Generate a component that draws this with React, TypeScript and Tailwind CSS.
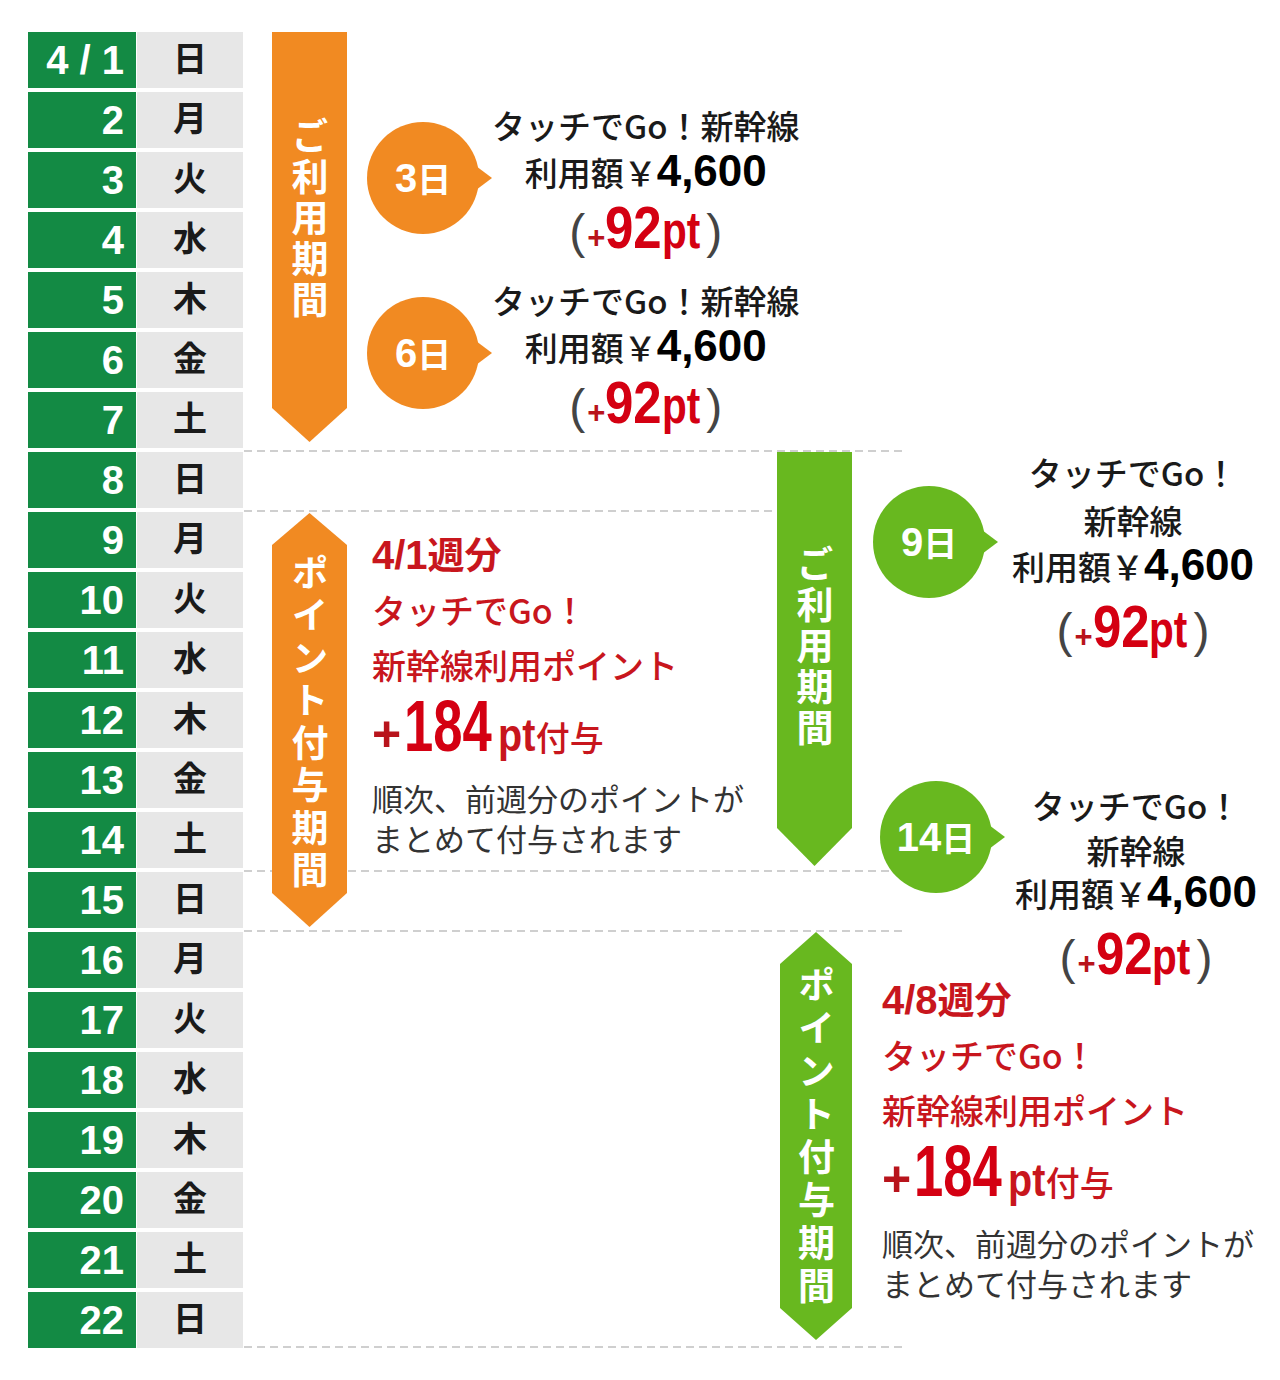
const latin = "font-['Liberation_Sans',sans-serif] font-bold";
const paren = "font-['Liberation_Sans',sans-serif] font-normal text-[48px] text-[#444]";

const days = ['日', '月', '火', '水', '木', '金', '土'];

function VText({ text, track }: { text: string; track: string }) {
  return (
    <div className={`[writing-mode:vertical-rl] text-white text-[37px] font-bold leading-none ${track}`}>
      {text}
    </div>
  );
}

function Bubble({ n, bg }: { n: string; bg: string }) {
  return (
    <div className="flex items-center shrink-0">
      <div className={`w-[112px] h-[112px] rounded-full ${bg} flex items-center justify-center text-white leading-none`}>
        <span className={`${latin} text-[40px]`}>{n}</span>
        <span className="text-[34px] font-bold">日</span>
      </div>
      <div className={`w-[16px] h-[24px] -ml-[3px] ${bg} [clip-path:polygon(0_0,100%_50%,0_100%)]`} />
    </div>
  );
}

function PtLine() {
  return (
    <div className="h-[40px] leading-[40px] text-[33px] whitespace-nowrap">
      <span className={paren}>(</span>
      <span className={`${latin} text-[31px] text-[#b8141c] ml-[2px]`}>+</span>
      <span className={`${latin} inline-block origin-left scale-x-[0.85] -mr-[10px] text-[60px] text-[#d40012]`}>92</span>
      <span className={`${latin} inline-block origin-left scale-x-[0.78] -mr-[11px] text-[52px] text-[#d40012]`}>pt</span>
      <span className={`${paren} ml-[6px]`}>)</span>
    </div>
  );
}

function AmountLine() {
  return (
    <div className="h-[40px] leading-[40px] text-[33px] whitespace-nowrap font-medium">
      <span>利用額￥</span>
      <span className={`${latin} text-[44px] text-black`}>4,600</span>
    </div>
  );
}

function PointBlock({ week }: { week: string }) {
  return (
    <div className="flex flex-col text-[#c8161d] whitespace-nowrap">
      <div className="h-[40px] leading-[40px] text-[37px] font-bold">
        <span className={`${latin} text-[40px]`}>{week}</span>
        <span>週分</span>
      </div>
      <div className="mt-[17px] h-[40px] leading-[40px] text-[34px] font-medium">タッチでGo！</div>
      <div className="mt-[15px] h-[40px] leading-[40px] text-[34px] font-medium">新幹線利用ポイント</div>
      <div className="mt-[21px] h-[40px] leading-[40px] text-[34px] font-medium">
        <span className={`${latin} text-[50px] text-[#b8141c] mr-[3px]`}>+</span>
        <span className={`${latin} inline-block origin-left scale-x-[0.73] -mr-[26px] text-[72px] text-[#d40012]`}>184</span>
        <span className={`${latin} inline-block origin-left scale-x-[0.86] -mr-[6px] text-[46px]`}>pt</span>
        <span>付与</span>
      </div>
      <div className="mt-[32px] leading-[40px] text-[31px] text-[#333]">
        順次、前週分のポイントが
        <br />
        まとめて付与されます
      </div>
    </div>
  );
}

export default function App() {
  return (
    <div className="w-[1280px] h-[1380px] bg-white pt-[32px] pl-[28px] font-['Noto_Sans_CJK_JP',sans-serif] text-[#1a1a1a]">
      <div className="grid grid-cols-[108px_108px_28px_75px_430px_75px_428px] grid-rows-[repeat(22,60px)]">
        {/* calendar */}
        <div className="col-start-1 col-span-2 row-start-1 row-span-22 flex flex-col gap-[4px]">
          {Array.from({ length: 22 }, (_, i) => (
            <div key={i} className="flex h-[56px] gap-[1px]">
              <div className={`w-[108px] bg-[#138a44] flex items-center justify-end pr-[12px] text-white text-[40px] ${latin}`}>
                {i === 0 ? '4 / 1' : i + 1}
              </div>
              <div className="w-[106px] bg-[#e7e7e7] flex items-center justify-center pb-[8px] text-[34px] font-bold">
                {days[i % 7]}
              </div>
            </div>
          ))}
        </div>

        {/* dashed lines */}
        <div className="col-start-3 col-span-5 row-start-8 self-start -mt-[2px] w-[662px] h-[2px] bg-[repeating-linear-gradient(90deg,#cfcfcf_0_8px,transparent_8px_13px)]" />
        <div className="col-start-3 col-span-5 row-start-9 self-start -mt-[2px] w-[533px] h-[2px] bg-[repeating-linear-gradient(90deg,#cfcfcf_0_8px,transparent_8px_13px)]" />
        <div className="col-start-3 col-span-5 row-start-15 self-start -mt-[2px] w-[662px] h-[2px] bg-[repeating-linear-gradient(90deg,#cfcfcf_0_8px,transparent_8px_13px)]" />
        <div className="col-start-3 col-span-5 row-start-16 self-start -mt-[2px] w-[662px] h-[2px] bg-[repeating-linear-gradient(90deg,#cfcfcf_0_8px,transparent_8px_13px)]" />
        <div className="col-start-3 col-span-5 row-start-22 self-end mb-[4px] w-[662px] h-[2px] bg-[repeating-linear-gradient(90deg,#cfcfcf_0_8px,transparent_8px_13px)]" />

        {/* orange bars */}
        <div className="col-start-4 row-start-1 row-span-7 self-start h-[410px] bg-[#f18a22] [clip-path:polygon(0_0,100%_0,100%_376px,50%_100%,0_376px)] flex justify-center pt-[85px]">
          <VText text="ご利用期間" track="tracking-[4px]" />
        </div>
        <div className="col-start-4 row-start-9 row-span-7 self-start mt-[1px] h-[414px] bg-[#f18a22] [clip-path:polygon(50%_0,100%_32px,100%_calc(100%_-_34px),50%_100%,0_calc(100%_-_34px),0_32px)] flex items-center justify-center pt-[8px]">
          <VText text="ポイント付与期間" track="tracking-[5.5px]" />
        </div>

        {/* green bars */}
        <div className="col-start-6 row-start-8 row-span-7 self-start h-[414px] bg-[#68b81f] [clip-path:polygon(0_0,100%_0,100%_376px,50%_100%,0_376px)] flex justify-center pt-[93px]">
          <VText text="ご利用期間" track="tracking-[4px]" />
        </div>
        <div className="col-start-6 row-start-16 row-span-7 self-start ml-[3px] h-[408px] bg-[#68b81f] [clip-path:polygon(50%_0,100%_32px,100%_calc(100%_-_32px),50%_100%,0_calc(100%_-_32px),0_32px)] flex items-center justify-center pt-[4px]">
          <VText text="ポイント付与期間" track="tracking-[6px]" />
        </div>

        {/* left usage */}
        <div className="col-start-5 row-start-1 row-span-7 self-start pt-[64px] flex flex-col gap-[15px]">
          {['3', '6'].map((d) => (
            <div key={d} className="flex items-center h-[160px] pl-[20px]">
              <div className="mt-[4px]">
                <Bubble n={d} bg="bg-[#f18a22]" />
              </div>
              <div className="w-[316px] flex flex-col items-center">
                <div className="h-[40px] leading-[40px] text-[33px] font-medium whitespace-nowrap">タッチでGo！新幹線</div>
                <div className="mt-[6px]"><AmountLine /></div>
                <div className="mt-[17px]"><PtLine /></div>
              </div>
            </div>
          ))}
        </div>

        {/* left points */}
        <div className="col-start-5 row-start-9 row-span-7 self-start pl-[25px] pt-[21px]">
          <PointBlock week="4/1" />
        </div>

        {/* right usage */}
        <div className="col-start-7 row-start-8 row-span-8 self-start flex flex-col">
          <div className="flex items-start pl-[21px]">
            <div className="mt-[34px]">
              <Bubble n="9" bg="bg-[#68b81f]" />
            </div>
            <div className="w-[270px] flex flex-col items-center">
              <div className="h-[40px] leading-[40px] text-[33px] font-medium">タッチでGo！</div>
              <div className="mt-[8px] h-[40px] leading-[40px] text-[33px] font-medium">新幹線</div>
              <div className="mt-[5px]"><AmountLine /></div>
              <div className="mt-[22px]"><PtLine /></div>
            </div>
          </div>
          <div className="flex items-start pl-[28px] mt-[138px]">
            <div className="-mt-[4px]">
              <Bubble n="14" bg="bg-[#68b81f]" />
            </div>
            <div className="w-[262px] flex flex-col items-center">
              <div className="h-[40px] leading-[40px] text-[33px] font-medium">タッチでGo！</div>
              <div className="mt-[5px] h-[40px] leading-[40px] text-[33px] font-medium">新幹線</div>
              <div className="mt-[2px]"><AmountLine /></div>
              <div className="mt-[22px]"><PtLine /></div>
            </div>
          </div>
        </div>

        {/* right points */}
        <div className="col-start-7 row-start-16 row-span-7 self-start pl-[30px] pt-[46px]">
          <PointBlock week="4/8" />
        </div>
      </div>
    </div>
  );
}
